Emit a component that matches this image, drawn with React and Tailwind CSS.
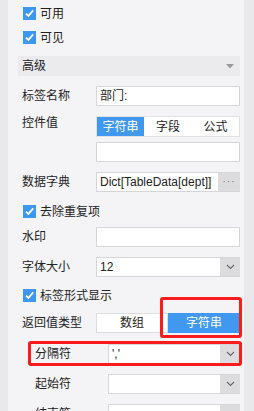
import React from 'react';

const font = { fontFamily: '"Liberation Sans", "Noto Sans CJK SC", sans-serif' };

const Check = ({ label, className = '' }) => (
  <div className={`flex h-[13px] items-center gap-[4px] pl-[5px] ${className}`}>
    <span className="flex h-[13px] w-[13px] items-center justify-center bg-[#3d97ee]">
      <svg width="11" height="11" viewBox="0 0 11 11">
        <path d="M2 5.6 L4.4 8 L9.2 2.4" fill="none" stroke="#fff" strokeWidth="1.8" />
      </svg>
    </span>
    <span className="text-[12px] leading-[14px] text-[#222]">{label}</span>
  </div>
);

const Chevron = () => (
  <span className="flex h-full w-[20px] items-center justify-center bg-[#dcdcde]">
    <svg width="9" height="6" viewBox="0 0 9 6">
      <path d="M1 1 L4.5 4.5 L8 1" fill="none" stroke="#666" strokeWidth="1.1" />
    </svg>
  </span>
);

const Row = ({ label, children, className = '', labelW = 'w-[78px]', pad = 'pl-[4px]' }) => (
  <div className={`flex h-[20px] items-center ${className}`}>
    <span className={`${labelW} ${pad} shrink-0 text-[12px] text-[#222]`}>{label}</span>
    {children}
  </div>
);

const Input = ({ children }) => (
  <div className="flex h-[20px] flex-1 items-center border border-[#d6d6d8] bg-white pl-[3px] text-[12px] text-[#222]">
    {children}
  </div>
);

const Select = ({ value }) => (
  <div className="flex h-[20px] flex-1 items-center border-y border-l border-[#d6d6d8] bg-white text-[12px] text-[#222]">
    <span className="flex-1 pl-[3px]">{value}</span>
    <Chevron />
  </div>
);

export default function App() {
  return (
    <div className="flex min-h-[411px] w-[254px] bg-[#e9e9eb]" style={font}>
      <div className="relative ml-[8px] w-[236px] overflow-hidden bg-[#f4f4f6] pl-[10px] pr-[4px]" style={{ height: 411 }}>
        <Check label="可用" className="mt-[7px]" />
        <Check label="可见" className="mt-[11px]" />

        <div className="mt-[12px] flex h-[20px] items-center justify-between bg-[#ebebed] pl-[4px] pr-[6px]">
          <span className="text-[12px] text-[#222]">高级</span>
          <svg width="8" height="5" viewBox="0 0 8 5">
            <path d="M0 0 H8 L4 4.5 Z" fill="#9a9a9a" />
          </svg>
        </div>

        <Row label="标签名称" className="mt-[10px]">
          <Input>部门:</Input>
        </Row>

        <div className="mt-[10px] flex items-start">
          <span className="w-[78px] shrink-0 pl-[4px] text-[12px] leading-[14px] text-[#222]">控件值</span>
          <div className="flex h-[21px] flex-1 border border-[#e2e2e4] bg-white text-[12px]">
            <span className="flex w-[47px] items-center justify-center bg-[#4198f0] text-white">字符串</span>
            <span className="flex w-[48px] items-center justify-center text-[#222]">字段</span>
            <span className="flex flex-1 items-center justify-center text-[#222]">公式</span>
          </div>
        </div>
        <div className="mt-[5px] flex">
          <span className="w-[78px] shrink-0" />
          <Input />
        </div>

        <Row label="数据字典" className="mt-[10px]">
          <div className="flex h-[20px] flex-1 items-center border-y border-l border-[#d6d6d8] bg-white text-[12px] text-[#222]">
            <span className="flex-1 pl-[3px]">Dict[TableData[dept]]</span>
            <span className="flex h-full w-[22px] items-center justify-center bg-[#dcdcde] text-[10px] leading-none tracking-[1px] text-[#777]">···</span>
          </div>
        </Row>

        <Check label="去除重复项" className="mt-[13px]" />

        <Row label="水印" className="mt-[9px]">
          <Input />
        </Row>

        <Row label="字体大小" className="mt-[10px]">
          <Select value="12" />
        </Row>

        <Check label="标签形式显示" className="mt-[12px]" />

        <Row label="返回值类型" className="mt-[11px]">
          <div className="flex h-[20px] flex-1 text-[12px]">
            <span className="flex w-[72px] items-center justify-center border border-[#dcdcde] bg-white text-[#222]">数组</span>
            <span className="flex flex-1 items-center justify-center bg-[#4198f0] text-white">字符串</span>
          </div>
        </Row>

        <Row label="分隔符" className="mt-[11px]" labelW="w-[90px]" pad="pl-[17px]">
          <Select value="','" />
        </Row>

        <Row label="起始符" className="mt-[10px]" labelW="w-[90px]" pad="pl-[17px]">
          <Select value="" />
        </Row>

        <Row label="结束符" className="mt-[10px]" labelW="w-[90px]" pad="pl-[17px]">
          <Select value="" />
        </Row>

        <div className="absolute left-[152px] top-[297px] h-[41px] w-[82px] rounded-[3px] border-[3px] border-[#fa1c1c]" />
        <div className="absolute left-[20px] top-[341px] h-[25px] w-[214px] rounded-[3px] border-[3px] border-[#fa1c1c]" />
      </div>
    </div>
  );
}
